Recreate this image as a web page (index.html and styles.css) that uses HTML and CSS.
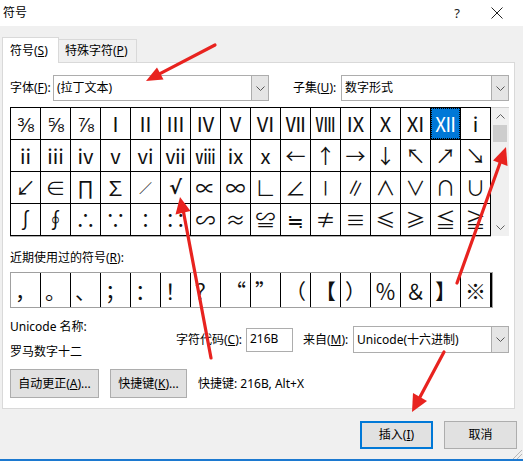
FILE: index.html
```html
<!DOCTYPE html>
<html lang="zh-CN">
<head>
<meta charset="utf-8">
<title>符号</title>
<link rel="stylesheet" href="styles.css">
</head>
<body>
<div class="window">
  <div class="titlebar">
    <span class="title">符号</span>
    <span class="help">?</span>
    <svg class="close" width="12" height="12" viewBox="0 0 12 12"><path d="M0.5 0.5 L11.5 11.5 M11.5 0.5 L0.5 11.5" stroke="#222" stroke-width="1" fill="none"/></svg>
  </div>

  <div class="tabs">
    <div class="tab tab-active">符号(<u>S</u>)</div>
    <div class="tab tab-idle">特殊字符(<u>P</u>)</div>
  </div>

  <div class="panel">
    <div class="font-row">
      <span class="lbl lbl-font">字体(<u>F</u>):</span>
      <div class="select sel-font">
        <span class="sel-val">(拉丁文本)</span>
        <span class="sel-drop"><svg width="9" height="5" viewBox="0 0 9 5"><polyline points="0.5,0.5 4.5,4.5 8.5,0.5" fill="none" stroke="#555"/></svg></span>
      </div>
      <span class="lbl lbl-subset">子集(<u>U</u>):</span>
      <div class="select sel-subset">
        <span class="sel-val">数字形式</span>
        <span class="sel-drop"><svg width="9" height="5" viewBox="0 0 9 5"><polyline points="0.5,0.5 4.5,4.5 8.5,0.5" fill="none" stroke="#555"/></svg></span>
      </div>
    </div>

    <div class="charbox">
      <div class="chargrid">
        <span class="cell">⅜</span><span class="cell">⅝</span><span class="cell">⅞</span><span class="cell">Ⅰ</span><span class="cell">Ⅱ</span><span class="cell">Ⅲ</span><span class="cell">Ⅳ</span><span class="cell">Ⅴ</span><span class="cell">Ⅵ</span><span class="cell">Ⅶ</span><span class="cell">Ⅷ</span><span class="cell">Ⅸ</span><span class="cell">Ⅹ</span><span class="cell">Ⅺ</span><span class="cell cell-sel">Ⅻ</span><span class="cell">ⅰ</span>
        <span class="cell">ⅱ</span><span class="cell">ⅲ</span><span class="cell">ⅳ</span><span class="cell">ⅴ</span><span class="cell">ⅵ</span><span class="cell">ⅶ</span><span class="cell">ⅷ</span><span class="cell">ⅸ</span><span class="cell">ⅹ</span><span class="cell">←</span><span class="cell">↑</span><span class="cell">→</span><span class="cell">↓</span><span class="cell">↖</span><span class="cell">↗</span><span class="cell">↘</span>
        <span class="cell">↙</span><span class="cell">∈</span><span class="cell">∏</span><span class="cell">∑</span><span class="cell cell-small">∕</span><span class="cell cell-latin">√</span><span class="cell">∝</span><span class="cell">∞</span><span class="cell">∟</span><span class="cell">∠</span><span class="cell">∣</span><span class="cell">∥</span><span class="cell">∧</span><span class="cell">∨</span><span class="cell">∩</span><span class="cell">∪</span>
        <span class="cell">∫</span><span class="cell">∮</span><span class="cell">∴</span><span class="cell">∵</span><span class="cell">∶</span><span class="cell">∷</span><span class="cell">∽</span><span class="cell">≈</span><span class="cell">≌</span><span class="cell">≒</span><span class="cell">≠</span><span class="cell">≡</span><span class="cell">≤</span><span class="cell">≥</span><span class="cell">≦</span><span class="cell">≧</span>
      </div>
      <div class="vscroll">
        <span class="sb-btn"><svg width="9" height="5" viewBox="0 0 9 5"><polyline points="0.5,4.5 4.5,0.5 8.5,4.5" fill="none" stroke="#606060"/></svg></span>
        <span class="sb-thumb"></span>
        <span class="sb-track"></span>
        <span class="sb-btn"><svg width="9" height="5" viewBox="0 0 9 5"><polyline points="0.5,0.5 4.5,4.5 8.5,0.5" fill="none" stroke="#606060"/></svg></span>
      </div>
    </div>

    <div class="recent-label">近期使用过的符号(<u>R</u>):</div>
    <div class="recent">
      <span class="rcell">，</span><span class="rcell">。</span><span class="rcell">、</span><span class="rcell">；</span><span class="rcell">：</span><span class="rcell">！</span><span class="rcell">？</span><span class="rcell">“</span><span class="rcell">”</span><span class="rcell">（</span><span class="rcell">【</span><span class="rcell">）</span><span class="rcell">％</span><span class="rcell">＆</span><span class="rcell">】</span><span class="rcell">※</span>
    </div>

    <div class="info">
      <div class="uname">
        <div class="uname-line">Unicode 名称:</div>
        <div class="uname-line">罗马数字十二</div>
      </div>
      <span class="lbl lbl-code">字符代码(<u>C</u>):</span>
      <div class="code-input">216B</div>
      <span class="lbl lbl-from">来自(<u>M</u>):</span>
      <div class="select sel-from">
        <span class="sel-val">Unicode(十六进制)</span>
        <span class="sel-drop"><svg width="9" height="5" viewBox="0 0 9 5"><polyline points="0.5,0.5 4.5,4.5 8.5,0.5" fill="none" stroke="#555"/></svg></span>
      </div>
    </div>

    <div class="actions">
      <button class="btn btn-auto">自动更正(<u>A</u>)...</button>
      <button class="btn btn-key">快捷键(<u>K</u>)...</button>
      <span class="shortcut">快捷键: 216B, Alt+X</span>
    </div>
  </div>

  <div class="footer">
    <button class="btn btn-foot btn-default">插入(<u>I</u>)</button>
    <button class="btn btn-foot">取消</button>
  </div>
  <div class="bottomline"></div>

  <svg class="annot" width="523" height="461" viewBox="0 0 523 461">
    <g stroke="#e8231f" stroke-width="3.2" stroke-linecap="round" fill="none">
      <line x1="215" y1="45" x2="160" y2="73.6"/>
      <line x1="211" y1="358" x2="183.5" y2="212"/>
      <line x1="457" y1="283" x2="500" y2="163"/>
      <line x1="444" y1="352" x2="420" y2="397"/>
    </g>
    <g fill="#e8231f">
      <polygon points="146,81 163.5,79.5 157,67.5"/>
      <polygon points="180,197 190.5,211 175.5,214.5"/>
      <polygon points="506,147 507.5,166 493,160.5"/>
      <polygon points="412,412 427,401 413,393"/>
    </g>
    <g stroke="#b8b8b8" stroke-width="1">
      <line x1="513" y1="459" x2="522" y2="450"/>
      <line x1="517" y1="459" x2="522" y2="454"/>
    </g>
  </svg>
</div>
</body>
</html>
```

FILE: styles.css
```css
* { box-sizing: border-box; }

html, body {
  margin: 0;
  padding: 0;
  background: #f0f0f0;
}

body {
  font-family: "Noto Sans", "Noto Sans CJK SC", sans-serif;
  font-size: 12px;
  color: #000;
}

u { text-decoration: underline; text-underline-offset: 1px; }

.window {
  position: relative;
  width: 523px;
  height: 461px;
  background: #f0f0f0;
  display: flex;
  flex-direction: column;
  overflow: hidden;
}

/* title bar */
.titlebar {
  height: 26px;
  flex: none;
  background: #fff;
  display: flex;
  align-items: center;
  padding-left: 3px;
}
.title {
  font-size: 12px;
  line-height: 16px;
}
.help {
  margin-left: auto;
  font-size: 13px;
  color: #222;
  font-family: "Noto Sans", sans-serif;
}
.close {
  margin-left: 31px;
  margin-right: 20px;
}

/* tabs */
.tabs {
  margin-top: 11px;
  height: 25px;
  flex: none;
  display: flex;
  align-items: flex-end;
  padding-left: 2px;
}
.tab {
  display: flex;
  align-items: center;
  line-height: 16px;
}
.tab-active {
  position: relative;
  z-index: 1;
  width: 57px;
  height: 26px;
  margin-bottom: -1px;
  background: #fff;
  border: 1px solid #d9d9d9;
  border-bottom: none;
  padding-left: 7px;
}
.tab-idle {
  width: 78px;
  height: 23px;
  background: #f0f0f0;
  border: 1px solid #d9d9d9;
  border-left: none;
  border-bottom: none;
  padding-left: 6px;
}

/* panel */
.panel {
  flex: none;
  margin-left: 2px;
  width: 513px;
  height: 347px;
  background: #fff;
  border: 1px solid #d9d9d9;
  padding: 12px 0 0 7px;
}

.lbl {
  line-height: 16px;
  white-space: nowrap;
}

.font-row {
  display: flex;
  align-items: center;
  height: 26px;
}
.lbl-font { width: 43px; }
.lbl-subset { width: 48px; margin-left: 24px; }

.select {
  display: flex;
  align-items: stretch;
  border: 1px solid #adadad;
  background: #fff;
}
.sel-val {
  flex: 1;
  display: flex;
  align-items: center;
  padding-left: 3px;
  line-height: 16px;
  white-space: nowrap;
}
.sel-drop {
  width: 17px;
  display: flex;
  align-items: center;
  justify-content: center;
  background: #e5e5e5;
  border-left: 1px solid #adadad;
}
.sel-font { width: 216px; height: 26px; }
.sel-subset { width: 168px; height: 26px; }
.sel-from { width: 156px; height: 27px; }

/* character grid */
.charbox {
  margin-top: 6px;
  display: flex;
}
.chargrid {
  display: grid;
  grid-template-columns: repeat(16, 29px);
  grid-auto-rows: 31px;
  gap: 1px;
  background: #000;
  border: 1px solid #000;
  box-shadow: 0 1px 0 #b0b0b0;
}
.cell {
  background: #fff;
  display: flex;
  align-items: center;
  justify-content: center;
  font-family: "Noto Sans CJK SC", sans-serif;
  font-size: 20px;
  line-height: 1;
  color: #111;
  overflow: hidden;
}
.cell-small { font-size: 13px; }
.cell-latin {
  font-family: "DejaVu Sans", sans-serif;
  font-size: 19px;
  font-weight: bold;
}
.cell-sel {
  background: #0078d7;
  color: #fff;
  outline: 1px dotted #000;
  outline-offset: -1px;
}

.vscroll {
  width: 18px;
  height: 129px;
  background: #f0f0f0;
  display: flex;
  flex-direction: column;
  align-items: center;
  border-top: 1px solid #d0d0d0;
}
.sb-btn {
  height: 17px;
  width: 100%;
  display: flex;
  align-items: center;
  justify-content: center;
}
.sb-thumb {
  width: 14px;
  height: 17px;
  background: #cdcdcd;
}
.sb-track { flex: 1; }

/* recent */
.recent-label {
  margin-top: 14px;
  line-height: 16px;
}
.recent {
  margin-top: 6px;
  display: grid;
  grid-template-columns: repeat(16, 29px);
  grid-auto-rows: 34px;
  gap: 1px;
  width: 483px;
  background: #000;
  border: 1px solid #a0a0a0;
}
.rcell {
  background: #fff;
  display: flex;
  align-items: center;
  justify-content: center;
  font-family: "Noto Sans CJK SC", sans-serif;
  font-size: 21px;
  line-height: 1;
  color: #111;
  overflow: hidden;
}

/* info */
.info {
  margin-top: 11px;
  display: flex;
  align-items: center;
}
.uname {
  width: 166px;
  display: flex;
  flex-direction: column;
  gap: 9px;
}
.uname-line { line-height: 16px; }
.lbl-code { width: 70px; }
.code-input {
  width: 47px;
  height: 24px;
  border: 1px solid #adadad;
  padding: 2px 0 0 3px;
  line-height: 16px;
  background: #fff;
}
.lbl-from { width: 50px; margin-left: 10px; }

/* actions */
.actions {
  margin-top: 9px;
  display: flex;
  align-items: center;
}
.btn {
  font-family: "Noto Sans", "Noto Sans CJK SC", sans-serif;
  font-size: 12px;
  color: #000;
  background: #e1e1e1;
  border: 1px solid #adadad;
  padding: 0;
  line-height: 16px;
  white-space: nowrap;
}
.btn-auto { width: 89px; height: 29px; }
.btn-key { width: 77px; height: 29px; margin-left: 11px; }
.shortcut { margin-left: 11px; line-height: 16px; }

/* footer */
.footer {
  margin-top: 12px;
  display: flex;
  justify-content: flex-end;
  gap: 11px;
  padding-right: 6px;
}
.btn-foot { width: 73px; height: 28px; }
.btn-default { border: 2px solid #0078d7; }

.bottomline {
  margin-top: auto;
  height: 2px;
  background: #1c79d0;
}

.annot {
  position: absolute;
  left: 0;
  top: 0;
  pointer-events: none;
}
```
